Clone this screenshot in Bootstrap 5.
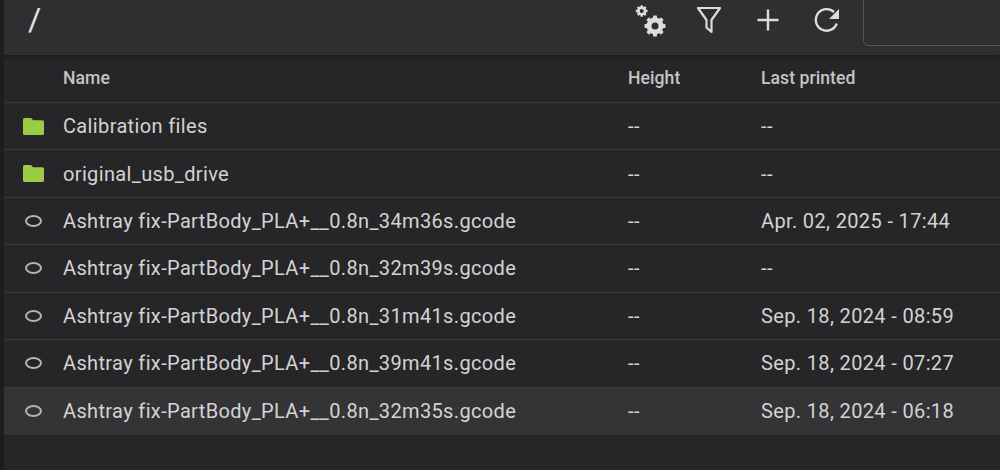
<!doctype html>
<html lang="en"><head><meta charset="utf-8"><title>Files</title>
<link href="https://cdn.jsdelivr.net/npm/bootstrap@5.3.0/dist/css/bootstrap.min.css" rel="stylesheet">
<style>
html,body{height:100%;overflow:hidden}
body{background:#1d1d1f;font-family:Roboto,sans-serif;color:#d8d8d8}
.shell{margin-left:4px;height:470px;background:#262628;overflow:hidden}
.topbar{height:55px;background:#2f2f31;box-shadow:0 2px 5px rgba(0,0,0,.35);position:relative;padding-left:24px}
.pathname{font-size:32px;color:#e2e2e2;font-weight:400;line-height:1;margin-top:-17px}
.tool{width:59px;padding:0;border:0;background:none;display:flex;justify-content:center;color:#dcdcdc}
.tool svg{display:block}
.tools{margin-right:144px;margin-top:-15px}
.searchbox{position:absolute;left:859px;top:-10px;width:200px;height:56px;border:1px solid #555;border-radius:5px}
.filetable{--bs-table-bg:transparent;--bs-table-color:#d3d3d3;table-layout:fixed;width:996px;margin:0;font-size:20px;letter-spacing:.357px;border-collapse:collapse}
.filetable td,.filetable th{padding:0;border-bottom:1px solid #3a3a3c;vertical-align:middle;height:47.45px;font-weight:400;white-space:nowrap}
.filetable th{font-size:17.6px;font-weight:500;letter-spacing:.05px;color:#c4c4c4}
.filetable .ico{width:59px;padding-left:19px}
.filetable .nm{width:565px}
.filetable .ht{width:133px}
.filetable tr.hov td{background:#343436;border-bottom-color:#343436}
.filetable tr:last-child td{border-bottom:0}
.folder{width:21px;height:17px;display:block}
.oval{width:17px;height:12px;display:block;border:2px solid #b4b4b4;border-radius:50%;margin-left:2px}
</style></head><body>
<div class="shell">
<div class="topbar d-flex align-items-center justify-content-between">
<div class="pathname">/</div>
<div class="tools d-flex align-items-center">
<button class="tool" aria-label="Settings"><svg width="32" height="33" viewBox="-1 -2 32 33" fill="currentColor">
<circle cx="20" cy="20" r="6" fill="none" stroke="currentColor" stroke-width="5"/>
<g><rect x="18" y="9.500" width="4" height="4.500" rx=".8"/><rect x="18" y="26" width="4" height="4.500" rx=".8"/><rect x="9.500" y="18" width="4.500" height="4" rx=".8"/><rect x="26" y="18" width="4.500" height="4" rx=".8"/></g>
<g transform="rotate(45 20 20)"><rect x="18" y="9.500" width="4" height="4.500" rx=".8"/><rect x="18" y="26" width="4" height="4.500" rx=".8"/><rect x="9.500" y="18" width="4.500" height="4" rx=".8"/><rect x="26" y="18" width="4.500" height="4" rx=".8"/></g>
<circle cx="6.700" cy="5" r="3.300" fill="none" stroke="currentColor" stroke-width="2.600"/>
<g><rect x="5.500" y="-.8" width="2.400" height="2.600" rx=".5"/><rect x="5.500" y="8.200" width="2.400" height="2.600" rx=".5"/><rect x=".9" y="3.800" width="2.600" height="2.400" rx=".5"/><rect x="9.900" y="3.800" width="2.600" height="2.400" rx=".5"/></g>
<g transform="rotate(45 6.700 5)"><rect x="5.500" y="-.8" width="2.400" height="2.600" rx=".5"/><rect x="5.500" y="8.200" width="2.400" height="2.600" rx=".5"/><rect x=".9" y="3.800" width="2.600" height="2.400" rx=".5"/><rect x="9.900" y="3.800" width="2.600" height="2.400" rx=".5"/></g>
</svg></button>
<button class="tool" aria-label="Filter"><svg width="26" height="28" viewBox="0 0 26 28" fill="none" stroke="currentColor" stroke-width="2.200" stroke-linejoin="round"><path d="M2 2h22L15.500 14v12l-5-4.500V14z"/></svg></button>
<button class="tool" aria-label="Add"><svg width="24" height="24" viewBox="0 0 24 24" fill="none" stroke="currentColor" stroke-width="2.400"><path d="M12 1.500v21M1.500 12h21"/></svg></button>
<button class="tool" aria-label="Refresh"><svg width="26" height="26" viewBox="0 0 26 26" fill="none" stroke="currentColor" stroke-width="2.400"><path d="M22.800 16.500A10.800 10.800 0 1 1 20 5"/><path d="M25 2v10h-10z" fill="currentColor" stroke="none"/></svg></button>
</div>
<div class="searchbox"></div>
</div>
<table class="table filetable">
<thead><tr><th class="ico"></th><th class="nm">Name</th><th class="ht">Height</th><th>Last printed</th></tr></thead>
<tbody>
<tr><td class="ico"><svg class="folder" viewBox="0 0 21 17"><path fill="#9ccc45" d="M0 1.500A1.500 1.500 0 0 1 1.500 0h6.500l2.200 2.200h9.300a1.500 1.500 0 0 1 1.500 1.500v11.800a1.500 1.500 0 0 1-1.500 1.500h-18A1.500 1.500 0 0 1 0 15.500z"/></svg></td><td>Calibration files</td><td>--</td><td>--</td></tr>
<tr><td class="ico"><svg class="folder" viewBox="0 0 21 17"><path fill="#9ccc45" d="M0 1.500A1.500 1.500 0 0 1 1.500 0h6.500l2.200 2.200h9.300a1.500 1.500 0 0 1 1.500 1.500v11.800a1.500 1.500 0 0 1-1.500 1.500h-18A1.500 1.500 0 0 1 0 15.500z"/></svg></td><td>original_usb_drive</td><td>--</td><td>--</td></tr>
<tr><td class="ico"><span class="oval"></span></td><td>Ashtray fix-PartBody_PLA+__0.8n_34m36s.gcode</td><td>--</td><td>Apr. 02, 2025 - 17:44</td></tr>
<tr><td class="ico"><span class="oval"></span></td><td>Ashtray fix-PartBody_PLA+__0.8n_32m39s.gcode</td><td>--</td><td>--</td></tr>
<tr><td class="ico"><span class="oval"></span></td><td>Ashtray fix-PartBody_PLA+__0.8n_31m41s.gcode</td><td>--</td><td>Sep. 18, 2024 - 08:59</td></tr>
<tr><td class="ico"><span class="oval"></span></td><td>Ashtray fix-PartBody_PLA+__0.8n_39m41s.gcode</td><td>--</td><td>Sep. 18, 2024 - 07:27</td></tr>
<tr class="hov"><td class="ico"><span class="oval"></span></td><td>Ashtray fix-PartBody_PLA+__0.8n_32m35s.gcode</td><td>--</td><td>Sep. 18, 2024 - 06:18</td></tr>
</tbody></table>
</div>
<script src="https://cdn.jsdelivr.net/npm/bootstrap@5.3.0/dist/js/bootstrap.bundle.min.js"></script>
</body></html>
